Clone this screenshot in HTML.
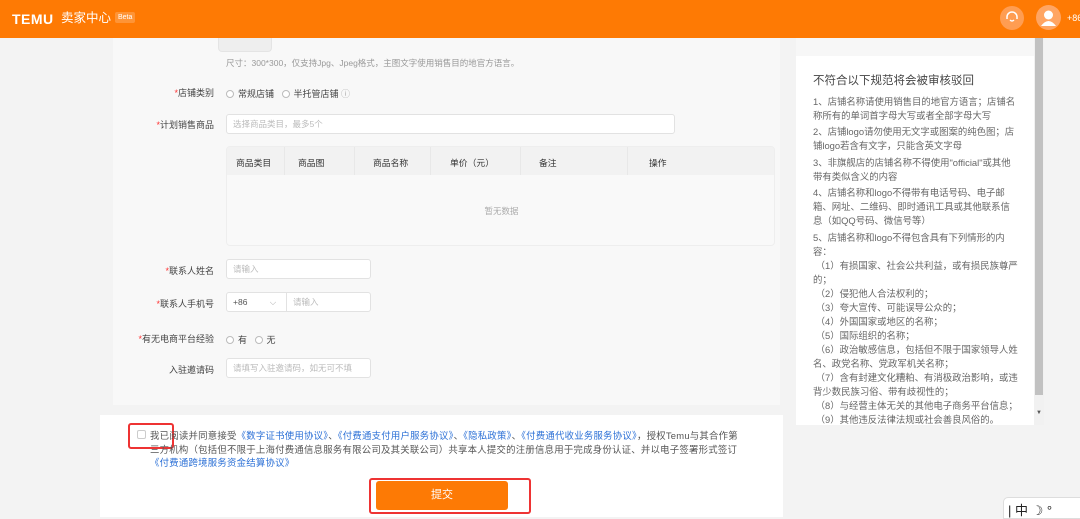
<!DOCTYPE html>
<html><head><meta charset="utf-8"><style>
*{margin:0;padding:0;box-sizing:border-box}
body{width:1080px;height:517px;overflow:hidden;background:#f3f3f3;font-family:"Liberation Sans","Noto Sans CJK SC",sans-serif;font-size:9px;color:#555;position:relative}
.abs{position:absolute}
.hdr{left:0;top:0;width:1080px;height:38px;background:#fe7a04}
.lbl{position:absolute;text-align:right;width:120px;left:94px;font-size:9px;color:#444}
.lbl b{color:#f33;font-weight:normal}
.inp{position:absolute;border:1px solid #e2e2e2;background:#fff;border-radius:3px;color:#bbb;font-size:8.5px;padding-left:6px;line-height:18px;height:20px}
.radio{display:inline-block;width:8px;height:8px;border:1px solid #bbb;border-radius:50%;vertical-align:-1px;margin-right:4px;background:#fff}
.rp{position:absolute;left:813px;width:206px;font-size:9.4px;line-height:14px;color:#666}
a{color:#2a6fd6;text-decoration:none}
.th{position:absolute;top:9px}
.td{position:absolute;top:0;width:1px;height:28px;background:#e8e8e8}
</style></head><body>
<div class="abs hdr"></div>
<div class="abs" style="left:12px;top:11px;color:#fff;font-weight:bold;font-size:14px;letter-spacing:0.5px;line-height:16px">TEMU</div>
<div class="abs" style="left:61px;top:10px;color:#fff;font-size:12.5px;line-height:16px">卖家中心</div>
<div class="abs" style="left:115px;top:12px;background:rgba(255,255,255,.2);color:#fff;font-size:7px;padding:1px 3px;border-radius:2px;line-height:9px">Beta</div>
<div class="abs" style="left:1000px;top:6px;width:24px;height:24px;border-radius:50%;background:#ff9d52"></div>
<svg class="abs" style="left:1003px;top:9px" width="18" height="18" viewBox="0 0 18 18"><path d="M4 10V8a5 5 0 0 1 10 0v2" fill="none" stroke="#fff" stroke-width="1.5"/><path d="M7 11q2 2 4 0" fill="none" stroke="#fff" stroke-width="1.3"/></svg>
<div class="abs" style="left:1036px;top:5px;width:25px;height:25px;border-radius:50%;background:#ffa563"></div>
<svg class="abs" style="left:1036px;top:5px" width="25" height="25"><circle cx="12.5" cy="10" r="4.5" fill="#fff"/><path d="M5 21q7.5-10 15 0z" fill="#fff"/></svg>
<div class="abs" style="left:1067px;top:13px;color:#fff;font-size:9px">+86</div>

<div class="abs" style="left:113px;top:38px;width:667px;height:367px;background:#f8f8f8"></div>
<div class="abs" style="left:218px;top:38px;width:54px;height:14px;background:#eee;border:1px solid #e4e4e4;border-top:none;border-radius:0 0 4px 4px"></div>
<div class="abs" style="left:226px;top:57px;color:#999;font-size:8.5px">尺寸：300*300，仅支持Jpg、Jpeg格式，主图文字使用销售目的地官方语言。</div>
<div class="lbl" style="top:86px"><b>*</b>店铺类别</div>
<div class="abs" style="left:226px;top:87px;color:#444"><span class="radio"></span>常规店铺 &nbsp;&nbsp;<span class="radio"></span>半托管店铺 <span style="color:#aaa">ⓘ</span></div>
<div class="lbl" style="top:118px"><b>*</b>计划销售商品</div>
<div class="inp" style="left:226px;top:114px;width:449px">选择商品类目，最多5个</div>
<div class="abs" style="left:226px;top:146px;width:549px;height:100px;border:1px solid #eee;border-radius:4px;background:#f9f9f9;overflow:hidden">
<div style="height:28px;background:#f2f2f2;position:relative;color:#333;font-size:8.8px">
<span class="th" style="left:9px">商品类目</span><span class="td" style="left:57px"></span>
<span class="th" style="left:71px">商品图</span><span class="td" style="left:127px"></span>
<span class="th" style="left:146px">商品名称</span><span class="td" style="left:203px"></span>
<span class="th" style="left:223px">单价（元）</span><span class="td" style="left:293px"></span>
<span class="th" style="left:312px">备注</span><span class="td" style="left:400px"></span>
<span class="th" style="left:422px">操作</span></div>
<div class="abs" style="left:0;width:549px;top:58px;text-align:center;color:#aaa;font-size:8.5px">暂无数据</div></div>
<div class="lbl" style="top:264px"><b>*</b>联系人姓名</div>
<div class="inp" style="left:226px;top:259px;width:145px">请输入</div>
<div class="lbl" style="top:297px"><b>*</b>联系人手机号</div>
<div class="inp" style="left:226px;top:292px;width:145px;color:#555">+86 <span style="color:#aaa;margin-left:20px">⌵</span><span class="abs" style="left:59px;top:0;width:1px;height:18px;background:#e2e2e2"></span><span class="abs" style="left:66px;color:#bbb">请输入</span></div>
<div class="lbl" style="top:332px"><b>*</b>有无电商平台经验</div>
<div class="abs" style="left:226px;top:333px;color:#444"><span class="radio"></span>有 &nbsp;&nbsp;<span class="radio"></span>无</div>
<div class="lbl" style="top:363px">入驻邀请码</div>
<div class="inp" style="left:226px;top:358px;width:145px">请填写入驻邀请码，如无可不填</div>

<div class="abs" style="left:100px;top:415px;width:683px;height:102px;background:#fff"></div>
<div class="abs" style="left:137px;top:430px;width:9px;height:9px;border:1px solid #ccc;border-radius:2px"></div>
<div class="abs" style="left:128px;top:423px;width:46px;height:26px;border:2px solid #e33;border-radius:3px"></div>
<div class="abs" style="left:150px;top:429px;width:640px;font-size:9.4px;line-height:13.5px;color:#555;white-space:nowrap;letter-spacing:0.25px">我已阅读并同意接受<a>《数字证书使用协议》</a>、<a>《付费通支付用户服务协议》</a>、<a>《隐私政策》</a>、<a>《付费通代收业务服务协议》</a>，授权Temu与其合作第<br>三方机构（包括但不限于上海付费通信息服务有限公司及其关联公司）共享本人提交的注册信息用于完成身份认证、并以电子签署形式签订<br><a>《付费通跨境服务资金结算协议》</a></div>
<div class="abs" style="left:369px;top:478px;width:162px;height:36px;border:2px solid #e33;border-radius:3px"></div>
<div class="abs" style="left:376px;top:481px;width:132px;height:29px;background:#fd7a05;border-radius:3px;color:#fff;font-size:11px;text-align:center;line-height:29px">提交</div>

<div class="abs" style="left:796px;top:38px;width:238px;height:387px;background:#fff"></div>
<div class="abs" style="left:796px;top:38px;width:238px;height:18px;background:#f7f7f7"></div>
<div class="abs" style="left:1034px;top:38px;width:10px;height:387px;background:#f1f1f1"></div>
<div class="abs" style="left:1035px;top:38px;width:8px;height:357px;background:#c1c1c1"></div>
<div class="abs" style="left:1036px;top:410px;font-size:6px;color:#555">▼</div>
<div class="rp" style="top:74px;font-size:11.5px;color:#444">不符合以下规范将会被审核驳回</div>
<div class="rp" style="top:95px">1、店铺名称请使用销售目的地官方语言；店铺名称所有的单词首字母大写或者全部字母大写</div>
<div class="rp" style="top:125px">2、店铺logo请勿使用无文字或图案的纯色图；店铺logo若含有文字，只能含英文字母</div>
<div class="rp" style="top:156px">3、非旗舰店的店铺名称不得使用"official"或其他带有类似含义的内容</div>
<div class="rp" style="top:186px">4、店铺名称和logo不得带有电话号码、电子邮箱、网址、二维码、即时通讯工具或其他联系信息（如QQ号码、微信号等）</div>
<div class="rp" style="top:231px">5、店铺名称和logo不得包含具有下列情形的内容：<br>&nbsp;（1）有损国家、社会公共利益，或有损民族尊严的；<br>&nbsp;（2）侵犯他人合法权利的；<br>&nbsp;（3）夸大宣传、可能误导公众的；<br>&nbsp;（4）外国国家或地区的名称；<br>&nbsp;（5）国际组织的名称；<br>&nbsp;（6）政治敏感信息，包括但不限于国家领导人姓名、政党名称、党政军机关名称；<br>&nbsp;（7）含有封建文化糟粕、有消极政治影响，或违背少数民族习俗、带有歧视性的；<br>&nbsp;（8）与经营主体无关的其他电子商务平台信息；<br>&nbsp;（9）其他违反法律法规或社会善良风俗的。</div>

<div class="abs" style="left:1003px;top:497px;width:80px;height:22px;background:#fff;border:1px solid #ddd;border-radius:5px 0 0 0"></div>
<div class="abs" style="left:1008px;top:500px;font-size:13px;color:#222">| 中 ☽ °</div>
</body></html>
